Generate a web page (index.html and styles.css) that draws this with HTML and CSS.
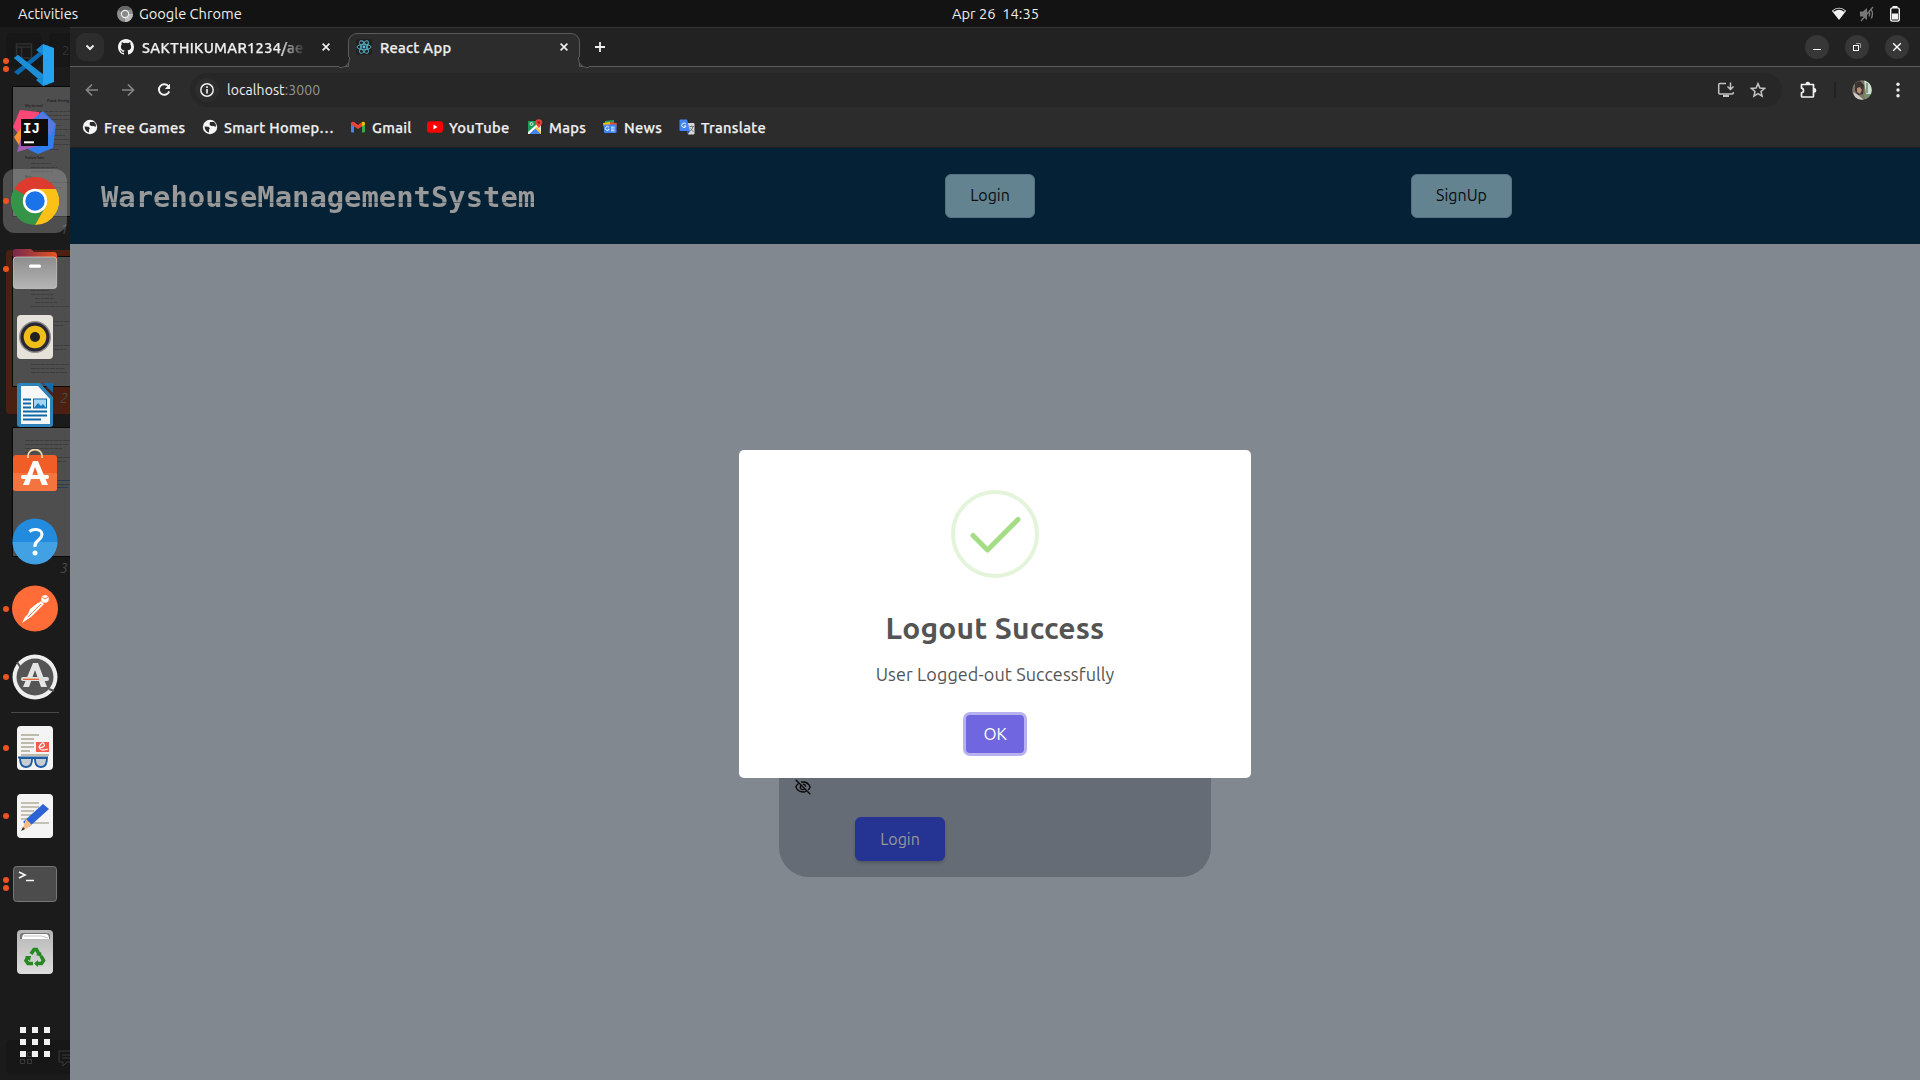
FILE: index.html
```html
<!DOCTYPE html>
<html lang="en">
<head>
<meta charset="utf-8">
<title>React App</title>
<link rel="stylesheet" href="styles.css">
</head>
<body>
<header class="topbar">
  <div class="topbar-left">
    <span class="activities">Activities</span>
    <svg class="app-icon" width="16" height="16" viewBox="0 0 16 16"><circle cx="8" cy="8" r="8" fill="#8e8e8e"/><path d="M8 8L1 4A8 8 0 0 1 15 4H8z" fill="#666"/><path d="M8 8h8a8 8 0 0 1-8 8z" fill="#bbb"/><circle cx="8" cy="8" r="4.2" fill="#eee"/><circle cx="8" cy="8" r="3" fill="#888"/></svg>
    <span class="app-name">Google Chrome</span>
  </div>
  <span class="clock">Apr 26&nbsp; 14:35</span>
  <div class="tray">
    <svg width="16" height="16" viewBox="0 0 16 16"><path d="M.8 4.8Q8-1.5 15.2 4.800L8 14z" fill="#f2f2f2"/><path d="M2.500 5.200Q8 1 13.500 5.200" fill="none" stroke="#131313" stroke-width="1.200"/></svg>
    <svg width="16" height="16" viewBox="0 0 16 16" fill="none" stroke="#777" stroke-width="1.400"><path d="M1 5.500h3l4-3.500v12L4 10.500H1z" fill="#777" stroke="none"/><path d="M10 5.500q1.500 2.500 0 5M12.200 3.500q2.500 4.500 0 9M2 15L14 1"/></svg>
    <svg width="16" height="16" viewBox="0 0 16 16"><rect x="3.700" y="1.900" width="8.600" height="13.200" rx="1.800" fill="none" stroke="#f2f2f2" stroke-width="1.400"/><path d="M5.500 0h5v2h-5zM5 7.500h6v6H5z" fill="#f2f2f2"/></svg>
  </div>
</header>

<main class="desktop">
<nav class="dock">
  <svg class="backdrop" width="70" height="1053" viewBox="0 27 70 1053">
    <g fill="#171717"><rect x="6" y="33" width="35" height="34" rx="5"/><rect x="49" y="33" width="30" height="34" rx="5"/><rect x="6" y="1040" width="70" height="34" rx="5"/></g>
    <path d="M16.500 44h15v14h-15zM16.500 47h15M21.500 47v11" fill="none" stroke="#303030" stroke-width="1.500"/>
    <text x="62" y="55" font-size="13" fill="#333">2</text>
    <rect x="6" y="250" width="70" height="164" rx="4" fill="#4a2012"/>
    <g fill="#4e4e4e" stroke="#080808"><rect x="12.500" y="86.500" width="70" height="130"/><rect x="12.500" y="256.500" width="70" height="130"/><rect x="12.500" y="427.500" width="70" height="129"/></g>
    <g fill="#222" font-weight="bold"><text x="47" y="102" font-size="4">Flask Hiring</text><text x="25" y="107" font-size="2.800">Why the test?</text><text x="25" y="159" font-size="2.800">Problem Tasks</text><text x="25" y="178" font-size="2.800">Note:</text></g>
    <g stroke="#3d3d3d" stroke-width="1" fill="none"><path stroke-dasharray="5 .7 3 .8" d="M30 111.500h40M25 115.500h45M25 119.500h45M25 125.500h36M25 129.500h45M25 135.500h40M25 139.500h45M25 144.500h45M25 149.500h34M31 163.500h20M31 167.500h26M31 171.500h22M25 182.500h45M25 187.500h38M31 290.500h19M31 294.500h22M35 298.500h20M35 302.500h22M31 306.500h39M54 321.500h16M54 325.500h10M54 345.500h16M54 349.500h12M31 364.500h39M31 368.500h34M31 372.500h36M25 440.500h45M25 444.500h44M25 448.500h37M25 452.500h8M57 457.500h13M57 461.500h9"/><path stroke="#273c55" d="M57 480.500h13M57 484.500h12M57 487.500h11"/></g>
    <g font-style="italic" font-size="14" fill="#494949"><text x="60" y="234">1</text><text x="60" y="403">2</text><text x="60" y="573">3</text></g>
    <path d="M20.500 1059.500h4v4h-4zM27.500 1052.500h4v4h-4zM27.500 1059.500h4v4h-4zM59 1051h16M59 1051v11h4v4l4-4h8M62 1055h10M62 1058h10" fill="none" stroke="#3b3b3b"/>
  </svg>
  <div class="dock-item run2">
    <svg viewBox="0 0 48 48"><path d="M3 17l4-3 30 25v5z" fill="#1478be"/><path d="M3 31l4 3L37 9V4z" fill="#0b68ad"/><path d="M3 17l4-3 26 20v9z" fill="#1c8fd6"/><path d="M32 3l11 4v34l-11 4z" fill="#26a3ee"/><path d="M25 9L32 3V45L25 39L32 34V14z" fill="#188bd6"/></svg>
  </div>
  <div class="dock-item">
    <svg viewBox="0 0 48 48"><path d="M2 18L9 1l19 2 1 18-18 9z" fill="#fc4777"/><path d="M22 10l10-8 13 13-3 24-15 6-15-7z" fill="#2f7df0"/><path d="M30 3l14 12-4 12-14-12z" fill="#5a76df"/><path d="M3 28l8-10 8 12-10 8z" fill="#f6922f"/><path d="M6 43l5-18 16 12z" fill="#a45bb4"/><rect x="10" y="10" width="27" height="27" fill="#0d0d0d"/><path d="M13 33.300h10" stroke="#fff" stroke-width="2"/><text x="12" y="24" font-size="14" font-family="Liberation Mono,monospace" font-weight="bold" fill="#fff">IJ</text></svg>
  </div>
  <div class="dock-item run active">
    <svg viewBox="0 0 48 48"><path d="M24 24L3.200 12A24 24 0 0 1 44.800 12z" fill="#dc3b2e"/><path d="M24 24L3.200 12A24 24 0 0 0 24 48L34.400 30z" fill="#359447"/><path d="M24 24L34.400 30L24 48A24 24 0 0 0 44.800 12H24z" fill="#fbc116"/><circle cx="24" cy="24" r="12.200" fill="#fff"/><circle cx="24" cy="24" r="9.700" fill="#1a73e8"/></svg>
  </div>
  <div class="dock-item run">
    <svg viewBox="0 0 48 48"><defs><linearGradient id="folder"><stop stop-color="#77284f"/><stop offset="1" stop-color="#e65421"/></linearGradient><linearGradient id="silver" x2="0" y2="1"><stop stop-color="#8d8d8d"/><stop offset="1" stop-color="#b5b5b5"/></linearGradient></defs><path d="M2 16V7q0-3 3-3h15l3 3h20q3 0 3 4v6z" fill="url(#folder)"/><rect x="2.300" y="12" width="43.400" height="31.500" rx="3" fill="url(#silver)" stroke="#cfcfcf" stroke-width=".7"/><rect x="18" y="19.500" width="12" height="3.300" rx="1.500" fill="#fff"/></svg>
  </div>
  <div class="dock-item">
    <svg viewBox="0 0 48 48"><rect x="6" y="2" width="36" height="44" rx="4" fill="#e6e2d9"/><circle cx="24" cy="24" r="16" fill="#8b8a88"/><circle cx="24" cy="24" r="14.500" fill="#292733"/><circle cx="24" cy="24" r="11.300" fill="#efbe18"/><circle cx="24" cy="24" r="5" fill="#222"/></svg>
  </div>
  <div class="dock-item">
    <svg viewBox="0 0 48 48"><path d="M9 2h20l13 14v27q0 3-3 3H9q-3 0-3-3V5q0-3 3-3z" fill="#2d82b7"/><path d="M10 5h17l12 13v25H10z" fill="#f8f8f8"/><path d="M32 2h10v10z" fill="#176aa5"/><path d="M12 18.500h8M12 22.500h8M12 26.500h8M12 30.500h24M12 34.500h24M12 38.500h18" stroke="#0d69a3" stroke-width="2"/><rect x="22.500" y="18" width="13" height="9" fill="#a4d5f2" stroke="#0d69a3"/><path d="M23 27l4-5 3 3 2-2 3 4z" fill="#167ab8"/></svg>
  </div>
  <div class="dock-item">
    <svg viewBox="0 0 48 48"><path d="M17 9V7a7 6.500 0 0 1 14 0v2" fill="none" stroke="#f0d6a6" stroke-width="1.800"/><rect x="2" y="6" width="44" height="36" rx="3" fill="#f15d26"/><path d="M2 24h44v15q0 3-3 3H5q-3 0-3-3z" fill="#f3743f"/><path d="M17 6v3M31 6v3" stroke="#f0d6a6" stroke-width="1.800"/><path d="M22 12h5l10 24h-6L24 18l-6 18h-6z" fill="#fff"/><rect x="10" y="26" width="28" height="4" rx="2" fill="#fff"/></svg>
  </div>
  <div class="dock-item">
    <svg viewBox="0 0 48 48"><circle cx="24" cy="24" r="22.500" fill="#228bdd"/><path d="M1.500 25h45a22.500 22.500 0 0 1-45 0z" fill="#41a1e3"/><path d="M18.500 14.500q3-2.500 7-2 7 1 5 7-1 2-4 4.500-3 2.500-2.500 6" fill="none" stroke="#fff" stroke-width="3"/><circle cx="24" cy="36" r="2.500" fill="#fff"/></svg>
  </div>
  <div class="dock-item run">
    <svg viewBox="0 0 48 48"><circle cx="24" cy="23.500" r="23" fill="#ff6c37"/><circle cx="34" cy="14" r="3.800" fill="#fff"/><path d="M30 16l3 3-13 13-9 6 3-6 3-3zM19 24l9-7-1 3-10 9z" fill="#fff"/><path d="M17 32l13-13M34 14l-3-2m3 2l3-2" stroke="#ff6c37" stroke-width=".9"/></svg>
  </div>
  <div class="dock-item run">
    <svg viewBox="0 0 48 48"><circle cx="24" cy="24" r="22.500" fill="#eee"/><circle cx="24" cy="24" r="18.500" fill="#555"/><path d="M6 9l4 6M38 36l5 2" stroke="#555" stroke-width="2"/><path d="M22 10h5l9 24h-6L24 17l-6 17h-6z" fill="#e5e5e5"/><rect x="10" y="24" width="28" height="4" rx="2" fill="#e0e0e0"/><path d="M12 26.300h16" stroke="#e95420" stroke-width="1.200"/></svg>
  </div>
  <hr class="dock-separator">
  <div class="dock-item run">
    <svg viewBox="0 0 48 48"><rect x="6" y="2" width="36" height="44" rx="4" fill="#f4f4f4"/><path d="M10 11h18M10 15h13M10 19h13M10 23h13M10 27h9M10 31h28" stroke="#bdb9ab" stroke-width="2"/><rect x="25" y="18" width="13" height="10" fill="#f25c4d"/><path d="M28 24q7-1 5-4t-5 3q1 5 9 2" fill="none" stroke="#fff" stroke-width="1.200"/><path d="M7 33.500h30M9 34q0 9 6 9t6-8q1-2 3 0 0 8 6 8t6-9z" fill="#c8cdd2" stroke="#1f5ba2" stroke-width="1.800"/></svg>
  </div>
  <div class="dock-item run">
    <svg viewBox="0 0 48 48"><rect x="6" y="2" width="36" height="44" rx="4" fill="#f4f4f4"/><path d="M10 11h18M10 15h18M10 19h13M10 23h13M10 27h9M20 31h18" stroke="#c4c0b4" stroke-width="2"/><path d="M32 12l6 5-20 18-6-5z" fill="#2d62d5"/><path d="M15 27l6 6-10 6z" fill="#f3bd86"/><path d="M12 35l2 2-4 2z" fill="#333"/></svg>
  </div>
  <div class="dock-item run2">
    <svg viewBox="0 0 48 48"><rect x="2.500" y="6.500" width="43" height="35" rx="3" fill="#4c4c4c" stroke="#777"/><path d="M8 12l6 3-6 3M15 20.500h8" fill="none" stroke="#f5f5f5" stroke-width="1.700"/></svg>
  </div>
  <div class="dock-item">
    <svg viewBox="0 0 48 48"><rect x="6" y="2" width="36" height="44" rx="4" fill="url(#bin)"/><defs><linearGradient id="bin" x2="0" y2="1"><stop stop-color="#b5b5b5"/><stop offset="1" stop-color="#dedede"/></linearGradient></defs><path d="M9 11V7q0-2 3-2h24q3 0 3 2v4z" fill="#777"/><path d="M11 11q0-5 3-5h21q3 0 3 5z" fill="#fff"/><path d="M13 8h18l6 2" fill="none" stroke="#aaa" stroke-width=".7"/><g fill="none" stroke="#268823" stroke-width="3.600"><path d="M20 26l3-4.500h2.500l2.500 4.500"/><path d="M30 28l2.500 4.500-2 3H26M22 35.500h-5l-2-3 2-4"/></g><path d="M25 27l5-3 1 5zM27 39v-7l-4 3.500zM14 28h6l-1 5z" fill="#268823"/></svg>
  </div>
  <svg class="apps-grid" width="30" height="30" viewBox="0 0 30 30" fill="#f2f2f2"><path d="M0 0h6v6H0zM12 0h6v6h-6zM24 0h6v6h-6zM0 12h6v6H0zM12 12h6v6h-6zM24 12h6v6h-6zM0 24h6v6H0zM12 24h6v6h-6zM24 24h6v6h-6z"/></svg>
</nav>

<section class="browser">
  <div class="tabstrip">
    <svg class="tab-search" viewBox="0 0 28 28"><path d="M10.500 12.500l3.500 3.500 3.500-3.500" fill="none" stroke="#eee" stroke-width="2"/></svg>
    <div class="tab">
      <svg width="16" height="16" viewBox="0 0 16 16"><path fill="#f5f5f5" d="M8 0C3.580 0 0 3.580 0 8c0 3.540 2.290 6.530 5.470 7.590.4.070.55-.17.55-.38v-1.490c-2.230.48-2.690-.95-2.690-.95-.36-.92-.89-1.170-.89-1.170-.73-.5.060-.49.060-.49.8.060 1.230.83 1.230.83.72 1.220 1.880.87 2.340.66.070-.52.280-.87.500-1.070-1.780-.2-3.640-.89-3.640-3.950 0-.87.310-1.590.82-2.150-.08-.2-.36-1.020.08-2.120 0 0 .67-.21 2.200.82a7.600 7.600 0 0 1 4 0c1.530-1.040 2.200-.82 2.200-.82.44 1.100.16 1.920.08 2.120.51.560.82 1.270.82 2.150 0 3.070-1.870 3.750-3.650 3.950.29.250.54.730.54 1.480v2.200c0 .21.150.46.550.38A8 8 0 0 0 16 8c0-4.420-3.580-8-8-8z"/></svg>
      <span class="tab-title faded">SAKTHIKUMAR1234/ae</span>
      <svg class="tab-close" width="8" height="8" viewBox="0 0 8 8"><path d="M.6.6l6.800 6.800M7.400.6L.6 7.400" stroke="#eee" stroke-width="1.700"/></svg>
    </div>
    <div class="tab current">
      <svg width="16" height="16" viewBox="0 0 16 16"><rect width="16" height="16" rx="2" fill="#212121"/><g fill="none" stroke="#58b9d0" stroke-width=".9"><ellipse cx="8" cy="8" rx="7" ry="2.700"/><ellipse cx="8" cy="8" rx="7" ry="2.700" transform="rotate(60 8 8)"/><ellipse cx="8" cy="8" rx="7" ry="2.700" transform="rotate(120 8 8)"/></g><circle cx="8" cy="8" r="1.400" fill="#58c4dc"/></svg>
      <span class="tab-title react">React App</span>
      <svg class="tab-close" width="8" height="8" viewBox="0 0 8 8"><path d="M.6.6l6.800 6.800M7.400.6L.6 7.400" stroke="#eee" stroke-width="1.700"/></svg>
    </div>
    <svg class="new-tab" width="10" height="10" viewBox="0 0 10 10"><path d="M5 0v10M0 5h10" stroke="#eee" stroke-width="1.800"/></svg>
    <div class="window-buttons">
      <svg viewBox="0 0 24 24"><path d="M8 14.500h8" stroke="#fff"/></svg>
      <svg viewBox="0 0 24 24" fill="none"><path d="M11 8.500h4.500V13" stroke="#999"/><rect x="8.500" y="10.500" width="5" height="5" stroke="#fff"/></svg>
      <svg viewBox="0 0 24 24"><path d="M8.200 8.200l7.600 7.600M15.800 8.200l-7.600 7.600" stroke="#fff" stroke-width="1.400"/></svg>
    </div>
  </div>
  <div class="toolbar">
    <div class="nav-buttons">
      <svg width="16" height="16" viewBox="0 0 16 16"><path d="M14 8H3M8 2.500L2.500 8 8 13.500" fill="none" stroke="#858585" stroke-width="1.700"/></svg>
      <svg width="16" height="16" viewBox="0 0 16 16"><path d="M2 8h11M8 2.500L13.500 8 8 13.500" fill="none" stroke="#858585" stroke-width="1.700"/></svg>
      <svg width="16" height="16" viewBox="0 0 16 16"><path d="M12.600 4.500A5.300 5.300 0 1 0 13.200 9.300" fill="none" stroke="#f2f2f2" stroke-width="1.900"/><path d="M14 1.800V7H8.800z" fill="#f2f2f2"/></svg>
    </div>
    <div class="omnibox">
      <svg class="site-info" viewBox="0 0 24 24"><circle cx="12" cy="12" r="6.200" fill="none" stroke="#eee" stroke-width="1.500"/><path d="M12 11v4.500M12 8.300v1.700" stroke="#eee" stroke-width="1.700"/></svg>
      <span class="url">localhost<span class="port">:3000</span></span>
      <svg class="install" width="18" height="16" viewBox="0 0 18 16" fill="none" stroke="#c4c4c4" stroke-width="1.500"><path d="M9 1.500H3q-1.300 0-1.300 1.300v8q0 1.200 1.300 1.200h12q1.300 0 1.300-1.200V10M13.500.5v6M10.500 4.500l3 3 3-3"/><path d="M6 13h6v2H6z" fill="#c4c4c4" stroke="none"/></svg>
      <svg width="16" height="16" viewBox="0 0 16 16"><path d="M8 1.600l1.900 4.400 4.700.4-3.600 3.100 1.100 4.700L8 11.700l-4.100 2.500L5 9.500 1.400 6.400l4.700-.4z" fill="none" stroke="#c4c4c4" stroke-width="1.500"/></svg>
    </div>
    <svg class="extensions" width="18" height="18" viewBox="0 0 18 18"><path d="M2.500 3.500h12v11.700q0 .8-.8.800H3.300q-.8 0-.8-.8v-3.400q2-.3 2-2.300t-2-2.300z" fill="none" stroke="#f2f2f2" stroke-width="1.700" stroke-linejoin="round"/><path d="M6.500 3a2.300 2.300 0 0 1 4.600 0zM15 7a2.400 2.400 0 0 1 0 4.800z" fill="#f2f2f2"/></svg>
    <span class="divider"></span>
    <svg class="avatar" width="20" height="20" viewBox="0 0 20 20"><clipPath id="face"><circle cx="10" cy="10" r="9.800"/></clipPath><g clip-path="url(#face)"><path fill="#7b7566" d="M0 0h20v20H0z"/><path fill="#cce0da" d="M12 0h8v14h-6z"/><path fill="#8d9a73" d="M14 3h2v10h-2z"/><path fill="#3b3430" d="M3 3l5-2 4 4-1 9-5 1-3-4z"/><path fill="#b98b72" d="M5 8l3-1 2 3-2 4-3-2z"/><path fill="#74916c" d="M12 14h8v5l-7 1z"/><path fill="#d5cac8" d="M1 12l5 3 6 5H4z"/></g></svg>
    <svg width="4" height="16" viewBox="0 0 4 16" fill="#eee"><circle cx="2" cy="2.300" r="1.700"/><circle cx="2" cy="8" r="1.700"/><circle cx="2" cy="13.700" r="1.700"/></svg>
  </div>
  <div class="bookmarks">
    <a class="bm bm-games"><svg viewBox="0 0 16 16"><circle cx="8" cy="8" r="7.200" fill="#f5f5f5"/><path d="M2.500 7.500l4 .2 1.500 1.500-1 1.500v2.800Q3 12.500 2.500 7.500zM8 3h4q2.500 2 1.700 5l-2-1H9L7.500 5.500z" fill="#2c2c2c"/></svg><span>Free Games</span></a>
    <a class="bm bm-smart"><svg viewBox="0 0 16 16"><circle cx="8" cy="8" r="7.200" fill="#f5f5f5"/><path d="M2.500 7.500l4 .2 1.500 1.500-1 1.500v2.800Q3 12.500 2.500 7.500zM8 3h4q2.500 2 1.700 5l-2-1H9L7.500 5.500z" fill="#2c2c2c"/></svg><span>Smart Homep…</span></a>
    <a class="bm bm-gmail"><svg viewBox="0 0 16 16"><path d="M1 4l3 2v7.500H2q-1 0-1-1z" fill="#4285f4"/><path d="M12 6l3-2v8.500q0 1-1 1h-2z" fill="#34a853"/><path d="M1 4q1-2 3-1l4 3 4-3v4.500L8 10 1 5.500z" fill="#ea4335"/><path d="M12 3q2-1 3 1v1.500l-3 2z" fill="#fbbc04"/></svg><span>Gmail</span></a>
    <a class="bm bm-youtube"><svg viewBox="0 0 16 16"><rect y="2.300" width="16" height="11.400" rx="3" fill="#f00"/><path d="M6.500 5.600l4 2.400-4 2.400z" fill="#fff"/></svg><span>YouTube</span></a>
    <a class="bm bm-maps"><svg viewBox="0 0 16 16"><path d="M1 2h13v13H1z" fill="#e7e7e7"/><path d="M1 2h8l2 4-10 9z" fill="#1a9c58"/><path d="M2 15l6-6 6 6z" fill="#4285f4"/><path d="M1 13L10 5l1 2-9 8H1z" fill="#fff"/><path d="M8 9l2-1 4 5v2z" fill="#fbc318"/><circle cx="4.500" cy="5" r="1.500" fill="none" stroke="#fff" stroke-width=".8"/><path d="M11.800 9Q8.500 5 8.500 3.500a3.300 3.300 0 0 1 6.600 0Q15 5 11.800 9z" fill="#e94335"/><circle cx="11.800" cy="3.500" r="1.200" fill="#8b1f16"/></svg><span>Maps</span></a>
    <a class="bm bm-news"><svg viewBox="0 0 16 16"><path d="M3 2l9-1v7H3z" fill="#21a558"/><path d="M1 4l7-1 1 6H2z" fill="#fbbc04"/><path d="M8 3l7 1-1 6H8z" fill="#d94c37"/><rect x="2" y="5.500" width="12.500" height="8.500" rx="1" fill="#4285f4"/><path d="M7 8.300a2 2 0 1 0 .2 2H5.700M9 8.200h3.500M9 10h3.500M9 11.800h3.500" fill="none" stroke="#fff" stroke-width=".9"/></svg><span>News</span></a>
    <a class="bm bm-translate"><svg viewBox="0 0 16 16"><path d="M7 4h7.500q1 0 1 1v9.500q0 1-1 1H9z" fill="#d8d8d8"/><path d="M1.500.5H8l3 11.500H1.500q-1 0-1-1v-9.500q0-1 1-1z" fill="#4285f4"/><path d="M8 12h3l-2 3z" fill="#2752a0"/><path d="M6.800 5a2.200 2.200 0 1 0 .3 2H5" fill="none" stroke="#fff"/><path d="M10.500 7.500H15M12.700 6.500v1M14 7.500q-.5 3-3 4.500M11.500 9.500l3 3.500" fill="none" stroke="#666" stroke-width=".8"/></svg><span>Translate</span></a>
  </div>

  <div class="page">
    <div class="site-header">
      <h1 class="brand">WarehouseManagementSystem</h1>
      <button class="header-btn login">Login</button>
      <button class="header-btn signup">SignUp</button>
    </div>
    <div class="stage">
      <form class="login-card">
        <svg class="eye" width="16" height="16" viewBox="0 0 16 16" fill="none" stroke="#050607" stroke-width="1.300"><path d="M3.800 4.200Q1.800 5.600.8 8q2.400 5 7.200 5 1.700 0 3-.6M6 3.200Q12.500 2 15.200 8q-.7 1.700-2 2.900M5.600 6.600q-1 2 .6 3.400 1.500 1.200 3.200.3M7.800 5.200q2.400 0 2.900 2.500M.7.700l14.600 14.600"/></svg>
        <button class="submit" type="button">Login</button>
      </form>
    </div>
    <div class="modal" role="dialog">
      <svg class="success" width="88" height="88" viewBox="0 0 88 88" fill="none"><circle cx="44" cy="44" r="42" stroke="#e4f4da" stroke-width="4"/><path d="M22 45.500L36.500 60 67 29.500" stroke="#a5dc86" stroke-width="5" stroke-linecap="round" stroke-linejoin="round"/></svg>
      <h2 class="modal-title">Logout Success</h2>
      <p class="modal-text">User Logged-out Successfully</p>
      <button class="ok">OK</button>
    </div>
  </div>
</section>
</main>
</body>
</html>
```
FILE: styles.css
```css
* { box-sizing: border-box; }
body { margin: 0; width: 1920px; height: 1080px; overflow: hidden; background: #1a1a1a; font-family: Ubuntu, "Noto Sans", sans-serif; }
svg { display: block; flex: none; }
button { font: inherit; border: 0; padding: 0; }
span, .brand, .modal-title, .modal-text { white-space: nowrap; }

.topbar { height: 27px; background: #131313; color: #eee; font-size: 14.67px; line-height: 27px; display: grid; grid-template-columns: 952px 1fr auto; }
.topbar-left { display: flex; align-items: center; padding-left: 18px; }
.activities { width: 99px; }
.app-name { margin-left: 6px; }
.tray { display: flex; align-items: center; gap: 12px; padding-right: 17px; }

.desktop { display: flex; height: 1053px; }

.dock { position: relative; width: 70px; flex: none; padding-top: 4px; background: #1b1b1b; display: flex; flex-direction: column; align-items: center; overflow: hidden; }
.backdrop { position: absolute; left: 0; top: 0; }
.dock-item { position: relative; width: 70px; height: 68px; flex: none; display: flex; align-items: center; justify-content: center; }
.dock-item > svg { width: 48px; height: 48px; position: relative; }
.dock-item.run::before, .dock-item.run2::before { content: ""; position: absolute; left: 3px; top: 31px; width: 6px; height: 6px; border-radius: 50%; background: #e95420; }
.dock-item.run2::before { top: 27px; box-shadow: 0 8px #e95420; }
.dock-item.active::after { content: ""; position: absolute; left: 3px; top: 2px; width: 64px; height: 64px; border-radius: 12px; background: rgba(200, 200, 200, .3); }
.dock-item.active > svg, .dock-item.active::before { z-index: 1; }
.dock-separator { position: relative; width: 48px; height: 1px; margin: 1px 0; border: 0; background: #484848; }
.apps-grid { position: relative; margin-top: 41px; }

.browser { flex: 1; display: flex; flex-direction: column; background: #2c2c2c; border-top: 1px solid #333; min-width: 0; }
.tabstrip { position: relative; height: 39px; display: flex; align-items: flex-start; padding: 5px 11px 0 6px; background: #222; border-bottom: 1px solid #5b5b5b; color: #eee; }
.tab-search { width: 28px; height: 28px; border-radius: 9px; background: #2d2d2d; }
.tab { display: flex; align-items: center; height: 28px; width: 244px; padding-left: 14px; font-size: 14.67px; font-weight: 500; letter-spacing: .3px; -webkit-text-stroke: .25px; }
.tab-title { margin-left: 8px; width: 166px; overflow: hidden; }
.tab-title.faded { mask-image: linear-gradient(90deg, #000 82%, transparent 99%); }
.tab-close { margin-left: 14px; }
.tab.current { position: relative; width: 232px; height: 34px; padding: 0 0 7px 7px; background: #2c2c2c; border: 1px solid #5b5b5b; border-bottom: 0; border-radius: 9px 9px 0 0; }
.tab.current .tab-title { width: 180px; }
.tab.current .tab-close { margin-left: 0; }
.tab.current::before, .tab.current::after { content: ""; position: absolute; bottom: -1px; width: 10px; height: 10px; border: 1px solid #5b5b5b; border-top: 0; background: #222; }
.tab.current::before { left: -10px; border-left: 0; border-bottom-right-radius: 9px; }
.tab.current::after { right: -10px; border-right: 0; border-bottom-left-radius: 9px; }
.new-tab { margin: 9px 0 0 15px; }
.window-buttons { display: flex; gap: 16px; margin: 2px 0 0 auto; }
.window-buttons svg { width: 24px; height: 24px; border-radius: 50%; background: #373737; }

.toolbar { height: 40px; flex: none; display: flex; align-items: center; padding: 6px 20px 0 14px; }
.nav-buttons { display: flex; gap: 20px; width: 106px; }
.omnibox { width: 1592px; height: 34px; border-radius: 17px; background: #272727; display: flex; align-items: center; padding: 0 16px 0 5px; }
.site-info { width: 24px; height: 24px; border-radius: 50%; background: #2d2d2d; }
.url { margin-left: 8px; font-size: 14px; letter-spacing: .08px; color: #f0f0f0; }
.port { color: #949494; }
.install { margin: 0 15px 0 auto; }
.extensions { margin-left: 17px; }
.divider { width: 2px; height: 16px; margin-left: 17px; background: #222; }
.avatar { margin: 0 24px 0 16px; }

.bookmarks { height: 41px; flex: none; display: flex; align-items: center; padding: 0 0 0 12px; border-bottom: 1px solid #202020; color: #f0f0f0; font-size: 14.67px; font-weight: 500; letter-spacing: .3px; -webkit-text-stroke: .25px; }
.bm { display: flex; align-items: center; gap: 6px; }
.bm svg { width: 16px; height: 16px; }
.bm-games { width: 120px; }
.bm-smart { width: 148px; }
.bm-gmail { width: 77px; }
.bm-youtube { width: 100px; }
.bm-maps { width: 75px; }
.bm-news { width: 77px; }

.page { position: relative; flex: 1; display: flex; flex-direction: column; background: #81888f; min-height: 0; }
.site-header { height: 96px; background: #042136; display: flex; align-items: center; padding: 0 0 0 31px; }
.brand { margin: 2px 0 0; width: 844px; font: bold 28.85px/40px "DejaVu Sans Mono", monospace; color: transparent; background: linear-gradient(#999 25px, #4f5d67 25px, #4f5d67 26px, #999 26px); background-clip: text; -webkit-background-clip: text; }
.header-btn { height: 44px; padding-bottom: 2px; border-radius: 6px; background: #648391; border: 1px solid #587080; color: #0a0d0f; font-size: 16px; }
.header-btn.login { width: 90px; }
.header-btn.signup { width: 101px; margin-left: 376px; }
.stage { height: 633px; display: flex; align-items: flex-end; justify-content: center; }
.login-card { width: 432px; height: 290px; border-radius: 30px; background: #666c76; display: flex; flex-direction: column; align-items: flex-start; justify-content: flex-end; padding: 0 16px 16px; }
.submit { width: 90px; height: 44px; margin: 22px 0 0 60px; border-radius: 6px; background: #253392; color: #999; font-size: 16px; box-shadow: 0 2px 3px rgba(0, 0, 0, .2); }

.modal { position: absolute; inset: 0; margin: auto; width: 512px; height: 328px; border-radius: 5px; background: #fff; color: #545454; display: flex; flex-direction: column; align-items: center; padding-top: 40px; }
.modal-title { margin: 30px 0 0; font-size: 30px; letter-spacing: .18px; line-height: 40px; font-weight: 700; }
.modal-text { margin: 12px 0 0; font-size: 18px; letter-spacing: .09px; line-height: 28px; }
.ok { margin-top: 27px; padding-bottom: 2px; width: 58px; height: 38px; border-radius: 4px; background: #7066e0; box-shadow: 0 0 0 3px #b7b2ef; color: #fff; font-size: 16.8px; }
```
